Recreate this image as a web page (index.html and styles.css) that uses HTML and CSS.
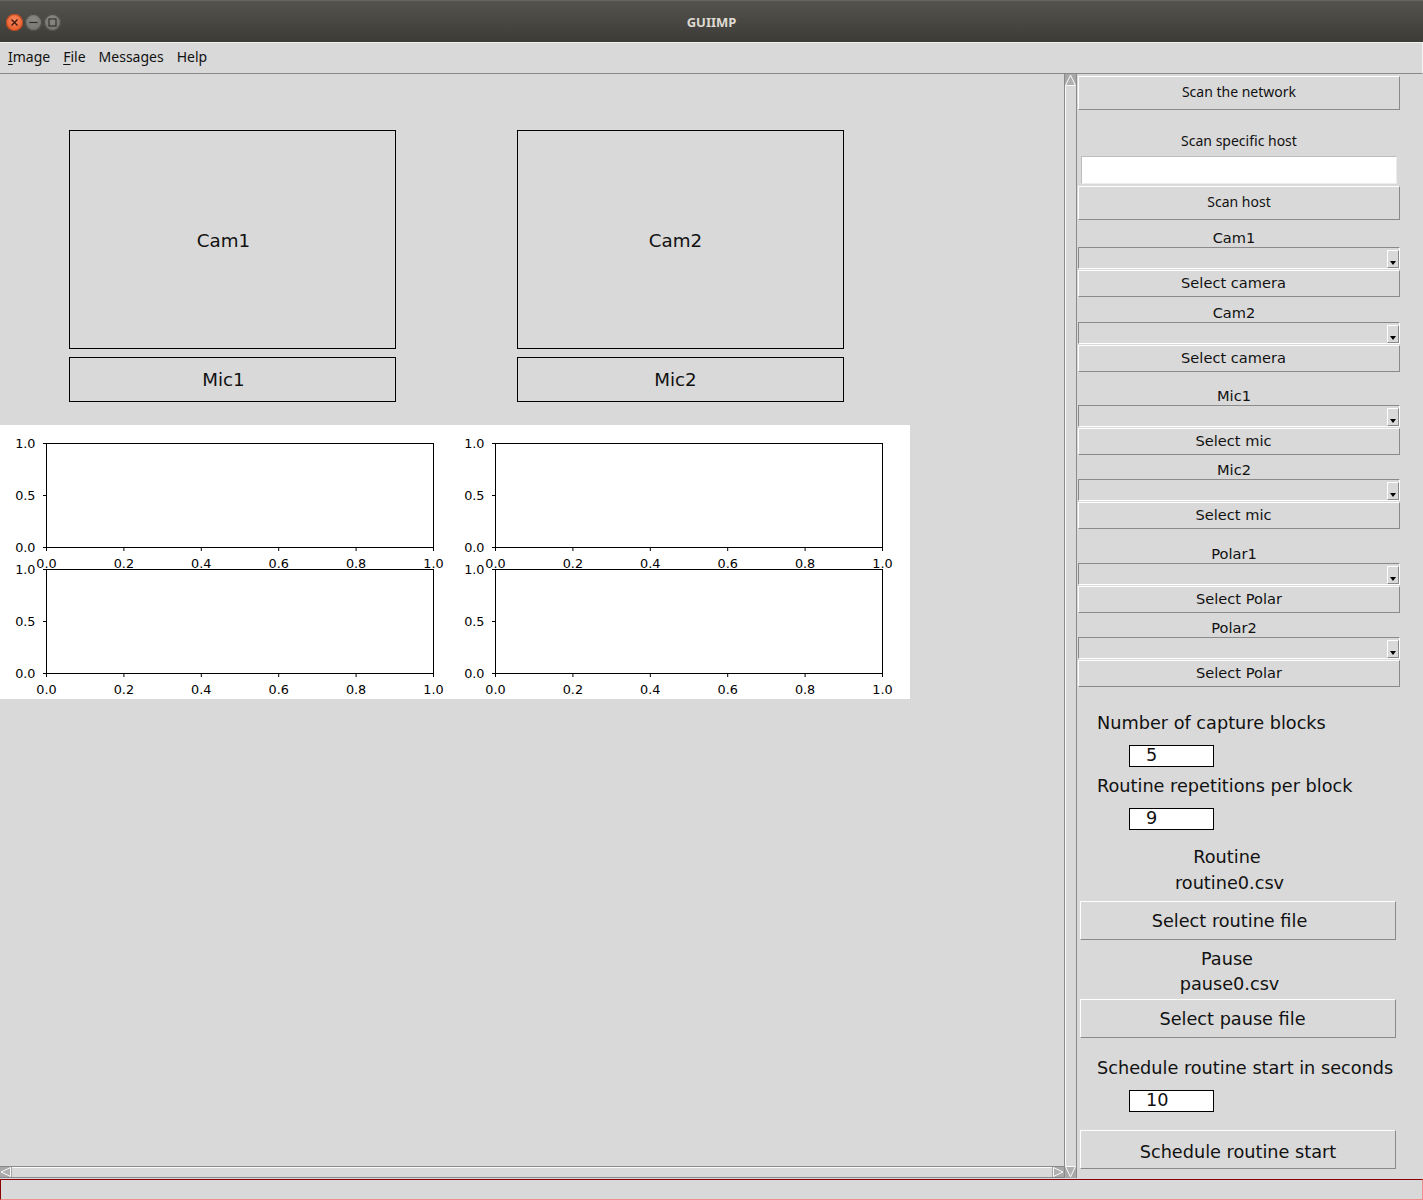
FILE: index.html
```
<!DOCTYPE html>
<html>
<head>
<meta charset="utf-8">
<title>GUIIMP</title>
<link rel="stylesheet" href="styles.css">
</head>
<body>
<div class="window">
  <div class="titlebar">
    <div class="controls">
      <span class="wbtn close"><svg width="17" height="17" viewBox="0 0 17 17"><path d="M5.5 5.5l6 6M11.5 5.5l-6 6" stroke="#3a1a0c" stroke-width="1.3"/></svg></span>
      <span class="wbtn"><svg width="17" height="17" viewBox="0 0 17 17"><path d="M4.5 8.5h8" stroke="#2e2d2a" stroke-width="1.2"/></svg></span>
      <span class="wbtn"><svg width="17" height="17" viewBox="0 0 17 17"><rect x="5" y="5" width="7" height="7" fill="none" stroke="#2e2d2a" stroke-width="1.1"/></svg></span>
    </div>
    <div class="title">GUIIMP</div>
    <div></div>
  </div>
  <div class="menubar">
    <span class="menu"><u>I</u>mage</span>
    <span class="menu"><u>F</u>ile</span>
    <span class="menu">Messages</span>
    <span class="menu">Help</span>
  </div>
  <div class="main">
    <div class="left">
      <div class="canvas">
        <div class="cams">
          <div class="cam c1">Cam1</div>
          <div class="cam c2">Cam2</div>
          <div class="mic c1">Mic1</div>
          <div class="mic c2">Mic2</div>
        </div>
        <svg class="plots" width="910" height="274" viewBox="0 0 910 274">
          <g class="ax" transform="translate(46.5,18.5)">
            <rect width="387" height="104" fill="#fff" stroke="#000"/>
            <path d="M-3.5 0H0M-3.5 52H0M-3.5 104H0M0 104v3.5M77.4 104v3.5M154.8 104v3.5M232.2 104v3.5M309.6 104v3.5M387 104v3.5" stroke="#000"/>
            <text x="-11" y="4.6" text-anchor="end">1.0</text>
            <text x="-11" y="56.6" text-anchor="end">0.5</text>
            <text x="-11" y="108.6" text-anchor="end">0.0</text>
            <text x="0" y="124" text-anchor="middle">0.0</text>
            <text x="77.4" y="124" text-anchor="middle">0.2</text>
            <text x="154.8" y="124" text-anchor="middle">0.4</text>
            <text x="232.2" y="124" text-anchor="middle">0.6</text>
            <text x="309.6" y="124" text-anchor="middle">0.8</text>
            <text x="387" y="124" text-anchor="middle">1.0</text>
          </g>
          <g class="ax" transform="translate(495.5,18.5)">
            <rect width="387" height="104" fill="#fff" stroke="#000"/>
            <path d="M-3.5 0H0M-3.5 52H0M-3.5 104H0M0 104v3.5M77.4 104v3.5M154.8 104v3.5M232.2 104v3.5M309.6 104v3.5M387 104v3.5" stroke="#000"/>
            <text x="-11" y="4.6" text-anchor="end">1.0</text>
            <text x="-11" y="56.6" text-anchor="end">0.5</text>
            <text x="-11" y="108.6" text-anchor="end">0.0</text>
            <text x="0" y="124" text-anchor="middle">0.0</text>
            <text x="77.4" y="124" text-anchor="middle">0.2</text>
            <text x="154.8" y="124" text-anchor="middle">0.4</text>
            <text x="232.2" y="124" text-anchor="middle">0.6</text>
            <text x="309.6" y="124" text-anchor="middle">0.8</text>
            <text x="387" y="124" text-anchor="middle">1.0</text>
          </g>
          <g class="ax" transform="translate(46.5,144.5)">
            <rect width="387" height="104" fill="#fff" stroke="#000"/>
            <path d="M-3.5 0H0M-3.5 52H0M-3.5 104H0M0 104v3.5M77.4 104v3.5M154.8 104v3.5M232.2 104v3.5M309.6 104v3.5M387 104v3.5" stroke="#000"/>
            <text x="-11" y="4.6" text-anchor="end">1.0</text>
            <text x="-11" y="56.6" text-anchor="end">0.5</text>
            <text x="-11" y="108.6" text-anchor="end">0.0</text>
            <text x="0" y="124" text-anchor="middle">0.0</text>
            <text x="77.4" y="124" text-anchor="middle">0.2</text>
            <text x="154.8" y="124" text-anchor="middle">0.4</text>
            <text x="232.2" y="124" text-anchor="middle">0.6</text>
            <text x="309.6" y="124" text-anchor="middle">0.8</text>
            <text x="387" y="124" text-anchor="middle">1.0</text>
          </g>
          <g class="ax" transform="translate(495.5,144.5)">
            <rect width="387" height="104" fill="#fff" stroke="#000"/>
            <path d="M-3.5 0H0M-3.5 52H0M-3.5 104H0M0 104v3.5M77.4 104v3.5M154.8 104v3.5M232.2 104v3.5M309.6 104v3.5M387 104v3.5" stroke="#000"/>
            <text x="-11" y="4.6" text-anchor="end">1.0</text>
            <text x="-11" y="56.6" text-anchor="end">0.5</text>
            <text x="-11" y="108.6" text-anchor="end">0.0</text>
            <text x="0" y="124" text-anchor="middle">0.0</text>
            <text x="77.4" y="124" text-anchor="middle">0.2</text>
            <text x="154.8" y="124" text-anchor="middle">0.4</text>
            <text x="232.2" y="124" text-anchor="middle">0.6</text>
            <text x="309.6" y="124" text-anchor="middle">0.8</text>
            <text x="387" y="124" text-anchor="middle">1.0</text>
          </g>
        </svg>
      </div>
      <div class="hscroll">
        <span class="arrow"><svg width="12" height="10" viewBox="0 0 12 10"><path d="M10.5 0.5L1 5L10.5 9.5Z" fill="#b0b0b0" stroke="#fafafa"/></svg></span>
        <span class="trough"></span>
        <span class="arrow"><svg width="12" height="10" viewBox="0 0 12 10"><path d="M1.5 0.5L11 5L1.5 9.5Z" fill="#b0b0b0" stroke="#fafafa"/></svg></span>
      </div>
    </div>
    <div class="vscroll">
      <span class="varrow"><svg width="11" height="12" viewBox="0 0 11 12"><path d="M0.5 11.5L5.5 1L10.5 11.5Z" fill="#b0b0b0" stroke="#fafafa"/></svg></span>
      <span class="varrow"><svg width="11" height="12" viewBox="0 0 11 12"><path d="M0.5 0.5L5.5 11L10.5 0.5Z" fill="#b0b0b0" stroke="#fafafa"/></svg></span>
    </div>
    <div class="panel">
      <div class="btn ui m2">Scan the network</div>
      <div class="lbl ui m21">Scan specific host</div>
      <div class="entry m5"></div>
      <div class="btn ui m2">Scan host</div>
      <div class="lbl m8">Cam1</div>
      <div class="combo m1"><span class="drop"></span></div>
      <div class="btn sm off m1">Select camera</div>
      <div class="lbl m6">Cam2</div>
      <div class="combo m1"><span class="drop"></span></div>
      <div class="btn sm off m1">Select camera</div>
      <div class="lbl m14">Mic1</div>
      <div class="combo m1"><span class="drop"></span></div>
      <div class="btn sm off m1">Select mic</div>
      <div class="lbl m5">Mic2</div>
      <div class="combo m1"><span class="drop"></span></div>
      <div class="btn sm off m1">Select mic</div>
      <div class="lbl m15">Polar1</div>
      <div class="combo m1"><span class="drop"></span></div>
      <div class="btn sm m1">Select Polar</div>
      <div class="lbl m5">Polar2</div>
      <div class="combo m1"><span class="drop"></span></div>
      <div class="btn sm m1">Select Polar</div>

      <div class="big m23">Number of capture blocks</div>
      <div class="num m11">5</div>
      <div class="big m6">Routine repetitions per block</div>
      <div class="num m11">9</div>
      <div class="cbig m14">Routine</div>
      <div class="cbig m2 shift">routine0.csv</div>
      <div class="lbtn o1 m7">Select routine file</div>
      <div class="cbig m6">Pause</div>
      <div class="cbig m1 shift">pause0.csv</div>
      <div class="lbtn o2 m4">Select pause file</div>
      <div class="big m17">Schedule routine start in seconds</div>
      <div class="num m11">10</div>
      <div class="lbtn last m18">Schedule routine start</div>
    </div>
  </div>
  <div class="status"><div class="status-in"></div></div>
</div>
</body>
</html>
```

FILE: styles.css
```
* { box-sizing: border-box; margin: 0; padding: 0; }
html, body { width: 1423px; height: 1200px; overflow: hidden; }
body { background: #d9d9d9; font-family: "DejaVu Sans", sans-serif; color: #000; }

.window { display: flex; flex-direction: column; width: 1423px; height: 1200px; }

.titlebar {
  height: 42px; flex: none;
  display: grid; grid-template-columns: 1fr auto 1fr; align-items: center;
  background: linear-gradient(#55534d, #3c3b37);
  border-top: 1px solid #67655f;
}
.controls { display: flex; gap: 2px; padding-left: 6px; padding-top: 1px; }
.wbtn {
  width: 17px; height: 17px; border-radius: 50%;
  background: radial-gradient(circle at 50% 35%, #8a8984, #6d6c67);
  box-shadow: inset 0 0 0 1px #4a4945;
  display: flex;
}
.wbtn.close { background: radial-gradient(circle at 50% 35%, #f7845a, #e4531f); box-shadow: inset 0 0 0 1px #b6461c; }
.title { font-family: "Noto Sans", sans-serif; font-weight: bold; font-size: 13px; color: #dfdbd2; }

.menubar {
  height: 32px; flex: none;
  display: flex; align-items: center; gap: 13px; padding-left: 8px; padding-bottom: 4px;
  border-top: 1px solid #f2f2f2; border-bottom: 1px solid #8a8a8a;
  border-right: 1px solid #f2f2f2;
  font-family: "Noto Sans", sans-serif; font-size: 14px; color: #111;
}
.menu u { text-decoration-thickness: 1px; text-underline-offset: 2px; }

.main { height: 1104px; flex: none; display: flex; }
.left { width: 1064px; flex: none; display: flex; flex-direction: column; }
.canvas { flex: 1; padding-top: 56px; overflow: hidden; }

.cams {
  display: grid; grid-template-columns: 327px 327px; grid-template-rows: 219px 45px;
  column-gap: 121px; row-gap: 8px; padding-left: 69px;
}
.cam, .mic {
  border: 1px solid #000; display: flex; align-items: center; justify-content: center;
  font-size: 18.3px; color: #111;
}
.cam { padding-top: 2px; }
.mic { padding-bottom: 1px; }
.c1 { padding-right: 18px; }
.c2 { padding-right: 10px; }
.plots { display: block; margin-top: 23px; background: #fff; }
.plots text { font-family: "DejaVu Sans", sans-serif; font-size: 12.8px; fill: #000; }

.hscroll {
  height: 12px; flex: none; display: flex;
  border-top: 1px solid #8a8a8a; border-bottom: 1px solid #8a8a8a;
}
.hscroll .arrow { width: 12px; height: 10px; display: flex; background: #a8a8a8; }
.hscroll .trough { flex: 1; border-top: 1px solid #fafafa; }

.vscroll {
  width: 13px; flex: none; display: flex; flex-direction: column; justify-content: space-between;
  border-left: 1px solid #8a8a8a; border-right: 1px solid #8a8a8a;
  box-shadow: inset 1px 0 #fafafa;
}
.vscroll .varrow { width: 11px; height: 12px; display: flex; background: #a8a8a8; }

.panel { width: 346px; flex: none; display: flex; flex-direction: column; overflow: hidden; }

.ui { font-family: "Noto Sans", sans-serif; font-size: 14px; padding-bottom: 3px; }
.btn {
  margin-left: 1px; width: 322px; height: 34px; flex: none;
  display: flex; align-items: center; justify-content: center;
  border: 1px solid; border-color: #ffffff #8a8a8a #8a8a8a #ffffff;
  color: #111;
}
.btn.sm { height: 27px; font-size: 14.6px; padding-bottom: 2px; }
.btn.off { padding-right: 11px; }

.lbl { margin-left: 1px; width: 312px; height: 18px; flex: none; display: flex; align-items: center; justify-content: center; font-size: 14.6px; color: #111; }
.lbl.ui { width: 322px; height: 20px; font-size: 14px; padding-bottom: 2px; }

.entry { margin-left: 4px; width: 316px; height: 28px; flex: none; background: #fff; border: 1px solid; border-color: #bdbdbd #ececec #ececec #bdbdbd; }

.combo {
  margin-left: 1px; width: 322px; height: 22px; flex: none;
  border: 1px solid; border-color: #8a8a8a #ffffff #ffffff #8a8a8a;
  display: flex; justify-content: flex-end; padding-top: 2px;
}
.drop {
  width: 12px; height: 18px; border: 1px solid; border-color: #ffffff #8a8a8a #8a8a8a #ffffff;
  display: flex; align-items: flex-end; justify-content: center; padding-bottom: 2px;
}
.drop::after { content: ""; border-left: 3.5px solid transparent; border-right: 3.5px solid transparent; border-top: 4px solid #000; }

.big { padding-left: 20px; height: 24px; flex: none; display: flex; align-items: center; font-size: 17.7px; color: #111; white-space: nowrap; padding-top: 1px; }
.cbig { width: 300px; height: 24px; flex: none; display: flex; align-items: center; justify-content: center; font-size: 17.7px; color: #111; padding-top: 1px; }
.cbig.shift { padding-left: 5px; }
.num { margin-left: 52px; width: 85px; height: 22px; flex: none; background: #fff; border: 1px solid #000; padding-left: 16px; font-size: 17.7px; line-height: 19px; color: #111; }
.lbtn {
  margin-left: 3px; width: 316px; height: 39px; flex: none;
  display: flex; align-items: center; justify-content: center;
  border: 1px solid; border-color: #ffffff #8a8a8a #8a8a8a #ffffff;
  font-size: 17.7px; color: #111; padding-top: 1px;
}
.lbtn.o1 { padding-right: 17px; }
.lbtn.o2 { padding-right: 11px; }
.lbtn.last { padding-top: 4px; }

.m1 { margin-top: 1px; } .m2 { margin-top: 2px; } .m4 { margin-top: 4px; } .m5 { margin-top: 5px; }
.m6 { margin-top: 6px; } .m7 { margin-top: 7px; } .m8 { margin-top: 8px; } .m11 { margin-top: 11px; }
.m14 { margin-top: 14px; } .m15 { margin-top: 15px; } .m17 { margin-top: 17px; } .m18 { margin-top: 18px; }
.m21 { margin-top: 21px; } .m23 { margin-top: 23px; }

.status { height: 22px; flex: none; padding-top: 1px; }
.status-in { height: 21px; border: 1px solid; border-color: #8b0000 #f08c8c #f08c8c #8b0000; }
```
